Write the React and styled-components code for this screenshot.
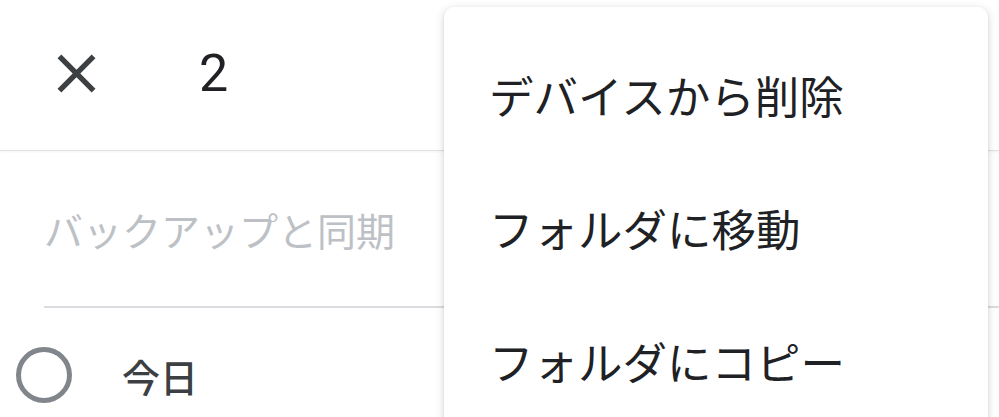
import React from "react";
import styled, { createGlobalStyle } from "styled-components";

const GlobalStyle = createGlobalStyle`
  html, body {
    margin: 0;
    padding: 0;
    background: #ffffff;
    overflow: hidden;
  }
  body {
    font-family: "Noto Sans CJK JP", "Noto Sans", Roboto, sans-serif;
  }
`;

const menuItems = ["デバイスから削除", "フォルダに移動", "フォルダにコピー"];

const App = () => {
  return (
    <>
      <GlobalStyle />
      <Page>
        <Header>
          <CloseButton aria-label="close">
            <svg width="65" height="65" viewBox="0 0 24 24">
              <path
                fill="#3c4043"
                d="M19 6.41L17.59 5 12 10.59 6.41 5 5 6.41 10.59 12 5 17.59 6.41 19 12 13.41 17.59 19 19 17.59 13.41 12z"
              />
            </svg>
          </CloseButton>
          <Count>2</Count>
        </Header>
        <Section>
          <SectionTitle>バックアップと同期</SectionTitle>
        </Section>
        <Row>
          <Radio />
          <RowLabel>今日</RowLabel>
        </Row>
        <Menu>
          {menuItems.map((item) => (
            <MenuItem key={item}>{item}</MenuItem>
          ))}
        </Menu>
      </Page>
    </>
  );
};

export default App;

const Page = styled.div`
  position: relative;
  width: 999px;
  height: 417px;
  overflow: hidden;
  background: #ffffff;
`;

const Header = styled.div`
  display: flex;
  align-items: center;
  height: 150px;
  padding-left: 44px;
  border-bottom: 1px solid #e3e3e3;
  box-shadow: 0 1px 2px rgba(0, 0, 0, 0.05);
`;

const CloseButton = styled.div`
  display: flex;
  width: 65px;
  height: 65px;
  margin-top: -4px;
`;

const Count = styled.span`
  margin-left: 90px;
  margin-top: -2px;
  font-family: Roboto, "Noto Sans", sans-serif;
  font-size: 52px;
  color: #202124;
  line-height: 1;
`;

const Section = styled.div`
  padding-left: 44px;
`;

const SectionTitle = styled.div`
  display: flex;
  align-items: center;
  height: 155px;
  font-size: 39px;
  color: #bdc1c6;
  border-bottom: 2px solid #dadce0;
`;

const Row = styled.div`
  display: flex;
  align-items: center;
  height: 134px;
  padding-left: 16px;
`;

const Radio = styled.div`
  box-sizing: border-box;
  width: 56px;
  height: 56px;
  border: 5px solid #80868b;
  border-radius: 50%;
`;

const RowLabel = styled.span`
  margin-left: 50px;
  font-size: 38px;
  font-weight: 500;
  color: #3c4043;
`;

const Menu = styled.div`
  position: absolute;
  top: 7px;
  left: 444px;
  width: 544px;
  height: 460px;
  padding-top: 21px;
  box-sizing: border-box;
  background: #ffffff;
  border-radius: 10px;
  box-shadow: 0 2px 10px rgba(0, 0, 0, 0.16), 0 1px 3px rgba(0, 0, 0, 0.08);
`;

const MenuItem = styled.div`
  display: flex;
  align-items: center;
  height: 133px;
  padding-left: 45px;
  font-size: 44.5px;
  color: #202124;
`;
